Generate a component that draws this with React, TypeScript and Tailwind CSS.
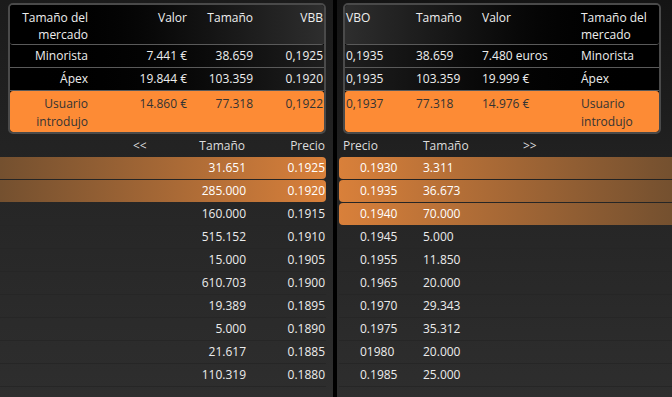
import React from "react";

const bids = [
  { size: "31.651", price: "0.1925", hi: true },
  { size: "285.000", price: "0.1920", hi: true },
  { size: "160.000", price: "0.1915" },
  { size: "515.152", price: "0.1910" },
  { size: "15.000", price: "0.1905" },
  { size: "610.703", price: "0.1900" },
  { size: "19.389", price: "0.1895" },
  { size: "5.000", price: "0.1890" },
  { size: "21.617", price: "0.1885" },
  { size: "110.319", price: "0.1880" },
];

const asks = [
  { price: "0.1930", size: "3.311", hi: true },
  { price: "0.1935", size: "36.673", hi: true },
  { price: "0.1940", size: "70.000", hi: true },
  { price: "0.1945", size: "5.000" },
  { price: "0.1955", size: "11.850" },
  { price: "0.1965", size: "20.000" },
  { price: "0.1970", size: "29.343" },
  { price: "0.1975", size: "35.312" },
  { price: "01980", size: "20.000" },
  { price: "0.1985", size: "25.000" },
];

const leftRows = [
  { kind: "Minorista", valor: "7.441 €", size: "38.659", vb: "0,1925" },
  { kind: "Ápex", valor: "19.844 €", size: "103.359", vb: "0.1920" },
];

const rightRows = [
  { vb: "0,1935", size: "38.659", valor: "7.480 euros", kind: "Minorista" },
  { vb: "0,1935", size: "103.359", valor: "19.999 €", kind: "Ápex" },
];

const LeftSummary = () => (
  <div className="w-[318px] h-[131px] ml-[8px] mt-[3px] border-2 border-[#4a4a4a] rounded-[5px] overflow-hidden flex flex-col bg-black">
    <div className="grid grid-cols-[80px_99px_66px_69px] h-[40px] pt-[4px] leading-[17px] text-right text-[#eeeeee] bg-linear-to-r from-black to-[#2e2e2e] border-b border-[#5a5a5a] rounded-b-[3px]">
      <div className="pr-[2px]">Tamaño del mercado</div>
      <div className="pr-[2px]">Valor</div>
      <div className="pr-[2px]">Tamaño</div>
      <div className="pr-[1px]">VBB</div>
    </div>
    {leftRows.map((r) => (
      <div
        key={r.kind}
        className="grid grid-cols-[80px_99px_66px_69px] h-[23px] items-center text-right text-[#eeeeee] bg-linear-to-r from-black to-[#1e1e1e] border-b border-[#5a5a5a]"
      >
        <div className="pr-[2px]">{r.kind}</div>
        <div className="pr-[2px]">{r.valor}</div>
        <div className="pr-[2px]">{r.size}</div>
        <div className="pr-[1px]">{r.vb}</div>
      </div>
    ))}
    <div className="grid grid-cols-[80px_99px_66px_69px] flex-1 pt-[4px] leading-[18px] text-right text-[#333333] bg-[#fd8b35] rounded-[3px]">
      <div className="pr-[2px]">Usuario introdujo</div>
      <div className="pr-[2px]">14.860 €</div>
      <div className="pr-[2px]">77.318</div>
      <div className="pr-[1px]">0,1922</div>
    </div>
  </div>
);

const RightSummary = () => (
  <div className="w-[318px] h-[131px] ml-[6px] mt-[3px] border-2 border-[#4a4a4a] rounded-[5px] overflow-hidden flex flex-col bg-black">
    <div className="grid grid-cols-[71px_66px_99px_78px] h-[40px] pt-[4px] leading-[17px] text-left text-[#eeeeee] bg-linear-to-r from-[#2e2e2e] to-black border-b border-[#5a5a5a] rounded-b-[3px]">
      <div className="pl-[1px]">VBO</div>
      <div>Tamaño</div>
      <div>Valor</div>
      <div>Tamaño del mercado</div>
    </div>
    {rightRows.map((r) => (
      <div
        key={r.kind}
        className="grid grid-cols-[71px_66px_99px_78px] h-[23px] items-center text-left text-[#eeeeee] bg-linear-to-r from-[#1e1e1e] to-black border-b border-[#5a5a5a]"
      >
        <div className="pl-[1px]">{r.vb}</div>
        <div>{r.size}</div>
        <div>{r.valor}</div>
        <div>{r.kind}</div>
      </div>
    ))}
    <div className="grid grid-cols-[71px_66px_99px_78px] flex-1 pt-[4px] leading-[18px] text-left text-[#333333] bg-[#fd8b35] rounded-[3px]">
      <div className="pl-[1px]">0,1937</div>
      <div>77.318</div>
      <div>14.976 €</div>
      <div>Usuario introdujo</div>
    </div>
  </div>
);

export default function App() {
  return (
    <div className="w-[672px] h-[397px] flex bg-black overflow-hidden font-['Open_Sans',sans-serif] text-[12px]">
      {/* bids */}
      <div className="w-[333px] h-full flex flex-col bg-linear-to-b from-[#1b1b1b] via-[#262626] to-[#2e2e2e]">
        <LeftSummary />
        <div className="flex h-[22px] mt-[1px] items-center text-[#dddddd]">
          <div className="w-[133px]" />
          <div className="w-[32px]">&lt;&lt;</div>
          <div className="w-[80px] text-right">Tamaño</div>
          <div className="w-[80px] text-right">Precio</div>
        </div>
        <div className="flex flex-col">
          {bids.map((b, i) =>
            b.hi ? (
              <div
                key={i}
                className="flex h-[22px] mb-[1px] w-[326px] items-center justify-end text-white rounded-r-[4px] bg-linear-to-r from-[#74502f] to-[#d9803a]"
              >
                <div className="w-[80px] text-right">{b.size}</div>
                <div className="w-[80px] text-right pr-[1px]">{b.price}</div>
              </div>
            ) : (
              <div
                key={i}
                className="flex h-[23px] w-[326px] items-center justify-end text-[#ececec] border-b border-[#262626]"
              >
                <div className="w-[80px] text-right">{b.size}</div>
                <div className="w-[80px] text-right pr-[1px]">{b.price}</div>
              </div>
            )
          )}
        </div>
      </div>

      <div className="w-[4px] h-full bg-black" />

      {/* asks */}
      <div className="flex-1 h-full flex flex-col bg-linear-to-b from-[#141414] via-[#252525] to-[#2e2e2e]">
        <RightSummary />
        <div className="flex h-[22px] mt-[1px] items-center text-[#dddddd] pl-[6px]">
          <div className="w-[80px]">Precio</div>
          <div className="w-[100px]">Tamaño</div>
          <div>&gt;&gt;</div>
        </div>
        <div className="flex flex-col">
          {asks.map((a, i) =>
            a.hi ? (
              <div
                key={i}
                className="flex h-[22px] mb-[1px] ml-[2px] items-center text-white rounded-l-[4px] bg-linear-to-r from-[#d9803a] to-[#74502f] pl-[21px]"
              >
                <div className="w-[63px]">{a.price}</div>
                <div>{a.size}</div>
              </div>
            ) : (
              <div
                key={i}
                className="flex h-[23px] ml-[2px] items-center text-[#ececec] border-b border-[#262626] pl-[21px]"
              >
                <div className="w-[63px]">{a.price}</div>
                <div>{a.size}</div>
              </div>
            )
          )}
        </div>
      </div>
    </div>
  );
}
